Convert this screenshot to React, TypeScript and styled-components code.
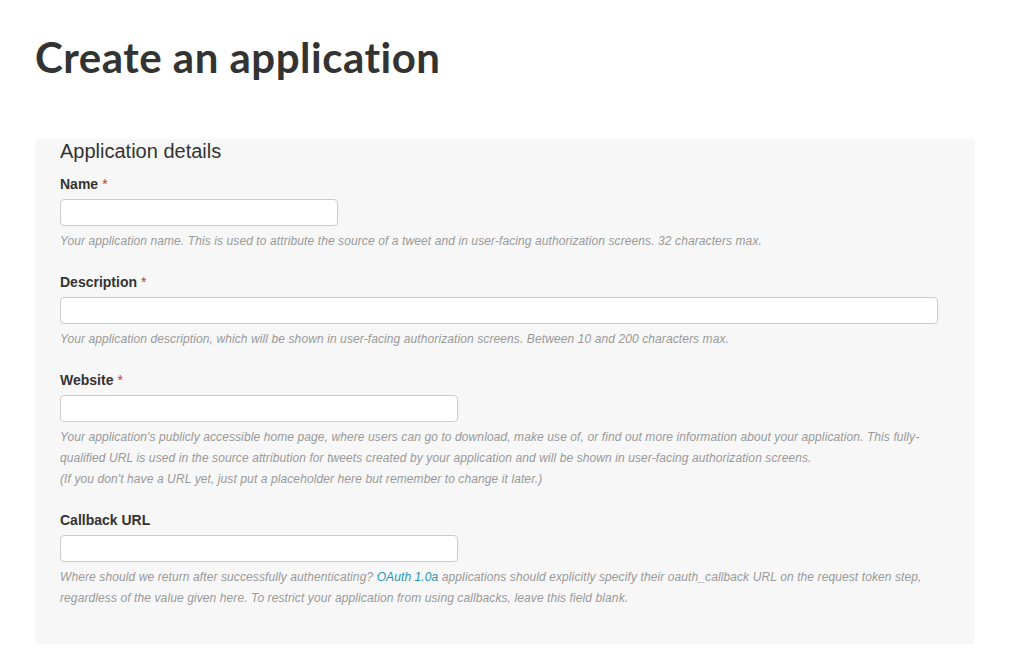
import React from "react";
import styled, { createGlobalStyle } from "styled-components";

const GlobalStyle = createGlobalStyle`
  body {
    margin: 0;
    background: #fff;
    font-family: "Liberation Sans", Arial, sans-serif;
  }
`;

const Page = styled.div`
  padding: 0 43px 0 35px;
`;

const Title = styled.h1`
  margin: 0;
  padding-top: 32px;
  height: 139px;
  box-sizing: border-box;
  font-family: "Lato", "Liberation Sans", sans-serif;
  font-weight: 700;
  font-size: 42px;
  line-height: 50px;
  letter-spacing: 0.5px;
  font-variant-ligatures: none;
  color: #333;
`;

const Panel = styled.div`
  width: 940px;
  box-sizing: border-box;
  background: #f7f7f7;
  border-radius: 4px;
  padding: 0 37px 35px 25px;
  display: flex;
  flex-direction: column;
  gap: 20px;
`;

const PanelHeading = styled.h2`
  margin: 0 0 -9px;
  font-size: 20px;
  font-weight: 400;
  line-height: 24px;
  color: #333;
`;

const Field = styled.div`
  display: flex;
  flex-direction: column;
`;

const Label = styled.label`
  font-size: 14px;
  font-weight: 700;
  line-height: 20px;
  color: #333;
`;

const Required = styled.span`
  color: #c33;
  font-weight: 400;
  margin-left: 4px;
`;

const Input = styled.input<{ $width: number }>`
  margin-top: 5px;
  width: ${({ $width }) => $width}px;
  height: 27px;
  box-sizing: border-box;
  border: 1px solid #ccc;
  border-radius: 4px;
  background: #fff;
  outline: none;
`;

const Help = styled.p`
  margin: 5px 0 0;
  font-size: 12px;
  font-style: italic;
  line-height: 21px;
  letter-spacing: 0.1px;
  color: #999;
`;

const Link = styled.a`
  color: #2a94b2;
  text-decoration: none;
`;

export default function App() {
  return (
    <>
      <GlobalStyle />
      <Page>
        <Title>Create an application</Title>
        <Panel>
          <PanelHeading>Application details</PanelHeading>
          <Field>
            <Label>
              Name<Required>*</Required>
            </Label>
            <Input $width={278} />
            <Help>
              Your application name. This is used to attribute the source of a
              tweet and in user-facing authorization screens. 32 characters max.
            </Help>
          </Field>
          <Field>
            <Label>
              Description<Required>*</Required>
            </Label>
            <Input $width={878} />
            <Help>
              Your application description, which will be shown in user-facing
              authorization screens. Between 10 and 200 characters max.
            </Help>
          </Field>
          <Field>
            <Label>
              Website<Required>*</Required>
            </Label>
            <Input $width={398} />
            <Help>
              Your application's publicly accessible home page, where users can
              go to download, make use of, or find out more information about
              your application. This fully-qualified URL is used in the source
              attribution for tweets created by your application and will be
              shown in user-facing authorization screens.
              <br />
              (If you don't have a URL yet, just put a placeholder here but
              remember to change it later.)
            </Help>
          </Field>
          <Field>
            <Label>Callback URL</Label>
            <Input $width={398} />
            <Help>
              Where should we return after successfully authenticating?{" "}
              <Link href="#">OAuth 1.0a</Link> applications should explicitly
              specify their oauth_callback URL on the request token step,
              regardless of the value given here. To restrict your application
              from using callbacks, leave this field blank.
            </Help>
          </Field>
        </Panel>
      </Page>
    </>
  );
}
